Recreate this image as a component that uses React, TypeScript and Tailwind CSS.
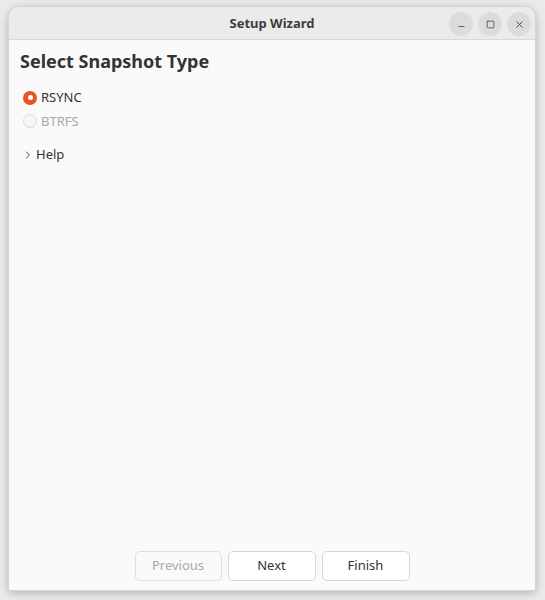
import { ChevronRight, Minus, Square, X } from "lucide-react";

export default function App() {
  return (
    <div
      className="h-[600px] w-[545px] bg-[#ececec] pl-[8px] pt-[6px]"
      style={{ fontFamily: '"Noto Sans", "DejaVu Sans", sans-serif' }}
    >
      <div className="flex h-[585px] w-[528px] flex-col overflow-hidden rounded-t-[12px] border border-[#d4d4d4] bg-[#fafafa] shadow-[0_2px_10px_rgba(0,0,0,0.25)]">
        <div className="relative flex h-[33px] shrink-0 items-center justify-center border-b border-[#d8d8d8] bg-[#ebebeb] pt-[2px]">
          <span className="text-[13px] font-bold text-[#3d3d3d]">Setup Wizard</span>
          <div className="absolute right-[4px] top-[5px] flex gap-[5px]">
            <div className="flex h-[24px] w-[24px] items-center justify-center rounded-full bg-[#dcdcdc]">
              <Minus size={9} strokeWidth={2} className="mt-[4px] text-[#3d3d3d]" />
            </div>
            <div className="flex h-[24px] w-[24px] items-center justify-center rounded-full bg-[#dcdcdc]">
              <Square size={9} strokeWidth={2} className="text-[#3d3d3d]" />
            </div>
            <div className="flex h-[24px] w-[24px] items-center justify-center rounded-full bg-[#dcdcdc]">
              <X size={11} strokeWidth={2} className="text-[#3d3d3d]" />
            </div>
          </div>
        </div>

        <div className="flex flex-1 flex-col px-[11px] pt-[8px]">
          <h1 className="text-[18px] font-bold leading-[26px] text-[#333]">Select Snapshot Type</h1>

          <div className="mt-[14px] flex flex-col gap-[4px] pl-[3px]">
            <label className="flex items-center gap-[4px] text-[13px] text-[#333]">
              <span className="flex h-[14px] w-[14px] items-center justify-center rounded-full bg-[#e95420]">
                <span className="h-[5px] w-[5px] rounded-full bg-white" />
              </span>
              RSYNC
            </label>
            <label className="flex items-center gap-[4px] text-[13px] text-[#a8a8a8]">
              <span className="h-[14px] w-[14px] rounded-full border border-[#dcdcdc] bg-[#f6f6f6]" />
              BTRFS
            </label>
          </div>

          <div className="mt-[14px] flex items-center gap-[2px] pl-[2px] text-[13px] text-[#333]">
            <ChevronRight size={12} strokeWidth={1.8} />
            Help
          </div>

          <div className="flex-1" />

          <div className="mb-[9px] flex justify-center gap-[6px]">
            <button className="h-[30px] w-[87px] rounded-[5px] border border-[#e0e0e0] bg-[#fafafa] text-[13px] text-[#a8a8a8]">
              Previous
            </button>
            <button className="h-[30px] w-[88px] rounded-[5px] border border-[#d6d6d6] bg-white text-[13px] text-[#333]">
              Next
            </button>
            <button className="h-[30px] w-[88px] rounded-[5px] border border-[#d6d6d6] bg-white text-[13px] text-[#333]">
              Finish
            </button>
          </div>
        </div>
      </div>
    </div>
  );
}
